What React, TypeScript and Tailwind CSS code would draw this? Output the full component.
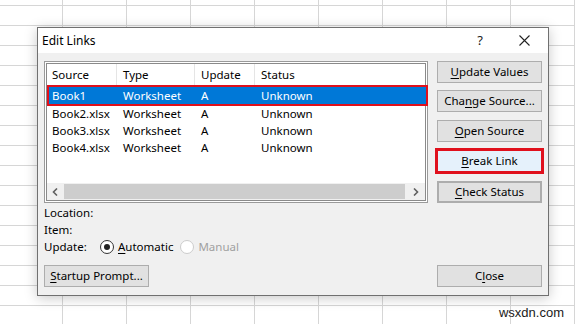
import React from "react";

const F = "font-['Noto_Sans',sans-serif]";

function Btn({ children, className = "" }: { children: React.ReactNode; className?: string }) {
  return (
    <div className={`h-[22px] w-[105px] flex items-center justify-center text-[11.5px] text-black bg-[#e1e1e1] border border-[#adadad] ${className}`}>
      {children}
    </div>
  );
}

function Radio({ checked, disabled }: { checked?: boolean; disabled?: boolean }) {
  return (
    <div className={`w-[14px] h-[14px] rounded-full border flex items-center justify-center bg-white ${disabled ? "border-[#cccccc] bg-[#f0f0f0]" : "border-[#333333]"}`}>
      {checked && <div className="w-[6px] h-[6px] rounded-full bg-[#222222]" />}
    </div>
  );
}

const rows = [
  ["Book1", "Worksheet", "A", "Unknown"],
  ["Book2.xlsx", "Worksheet", "A", "Unknown"],
  ["Book3.xlsx", "Worksheet", "A", "Unknown"],
  ["Book4.xlsx", "Worksheet", "A", "Unknown"],
];

export default function App() {
  return (
    <div className={`w-[575px] h-[324px] overflow-hidden bg-white bg-[linear-gradient(to_right,#d6d6d6_1px,transparent_1px),linear-gradient(to_bottom,#d6d6d6_1px,transparent_1px)] bg-[size:64px_20px] bg-[position:62px_5px] ${F}`}>
      <div className="pt-[27px] pl-[37px]">
        <div className="w-[512px] h-[269px] border border-[#707070] bg-[#f0f0f0] shadow-[0_2px_12px_rgba(0,0,0,0.22)] flex flex-col">
          {/* title bar */}
          <div className="h-[25px] bg-white flex items-center shrink-0">
            <div className="pl-[4px] text-[12px] text-black leading-none flex-1">Edit Links</div>
            <div className="w-[20px] text-[13px] text-[#222] leading-none text-center mr-[29px]">?</div>
            <svg width="11" height="11" viewBox="0 0 11 11" className="mr-[18px]">
              <path d="M0.5 0.5 L10.5 10.5 M10.5 0.5 L0.5 10.5" stroke="#222" strokeWidth="1.1" />
            </svg>
          </div>
          {/* body */}
          <div className="flex flex-1 pl-[6px] pr-[6px] pt-[8px] pb-[8px]">
            <div className="flex flex-col w-[384px]">
              {/* list */}
              <div className="h-[142px] border border-[#9a9a9a] p-[1px] bg-white">
                <div className="h-full border border-[#8a8a8a] bg-white flex flex-col">
                  <div className="h-[22px] flex items-center text-[11.5px] text-black shrink-0">
                    <div className="w-[70px] pl-[5px] border-r border-[#e5e5e5] h-full flex items-center">Source</div>
                    <div className="w-[78px] pl-[6px] border-r border-[#e5e5e5] h-full flex items-center">Type</div>
                    <div className="w-[60px] pl-[6px] border-r border-[#e5e5e5] h-full flex items-center">Update</div>
                    <div className="pl-[6px] h-full flex items-center">Status</div>
                  </div>
                  <div className="flex-1 flex flex-col">
                    {rows.map((r, i) => (
                      <div
                        key={i}
                        className={`h-[17px] flex items-center text-[11.5px] ${i === 0 ? "bg-[#0078d7] text-white outline-[2px] outline-solid outline-[#e0101c] ml-[2px] mr-[-1px] h-[16px] mt-[1px] mb-[1px]" : "text-black"}`}
                      >
                        <div className={`${i === 0 ? "w-[68px] pl-[3px]" : "w-[70px] pl-[5px]"}`}>{r[0]}</div>
                        <div className="w-[78px] pl-[6px]">{r[1]}</div>
                        <div className="w-[60px] pl-[6px]">{r[2]}</div>
                        <div className="pl-[6px]">{r[3]}</div>
                      </div>
                    ))}
                  </div>
                  {/* scrollbar */}
                  <div className="h-[17px] flex items-stretch shrink-0 bg-[#f0f0f0]">
                    <div className="w-[17px] flex items-center justify-center">
                      <svg width="7" height="8" viewBox="0 0 7 8"><path d="M5 0.5 L1.5 4 L5 7.5" stroke="#606060" strokeWidth="1.6" fill="none" /></svg>
                    </div>
                    <div className="flex-1 bg-[#cdcdcd] my-[1px]" />
                    <div className="w-[20px] flex items-center justify-center">
                      <svg width="7" height="8" viewBox="0 0 7 8"><path d="M2 0.5 L5.5 4 L2 7.5" stroke="#606060" strokeWidth="1.6" fill="none" /></svg>
                    </div>
                  </div>
                </div>
              </div>
              {/* info */}
              <div className="mt-[1px] text-[11.5px] text-black flex flex-col">
                <div className="h-[17px] flex items-center">Location:</div>
                <div className="h-[17px] flex items-center">Item:</div>
                <div className="h-[17px] flex items-center">
                  <span className="w-[56px]">Update:</span>
                  <Radio checked />
                  <span className="ml-[4px]"><span className="underline underline-offset-2">A</span>utomatic</span>
                  <span className="ml-[7px]"><Radio disabled /></span>
                  <span className="ml-[4px] text-[#a0a0a0]">Manual</span>
                </div>
              </div>
              <div className="flex-1" />
              <Btn className="w-[104px]">
                <span><span className="underline underline-offset-2">S</span>tartup Prompt...</span>
              </Btn>
            </div>
            <div className="flex-1" />
            <div className="flex flex-col w-[105px]">
              <Btn><span><span className="underline underline-offset-2">U</span>pdate Values</span></Btn>
              <Btn className="mt-[7px]"><span>Cha<span className="underline underline-offset-2">n</span>ge Source...</span></Btn>
              <Btn className="mt-[8px]"><span><span className="underline underline-offset-2">O</span>pen Source</span></Btn>
              <Btn className="mt-[8px] bg-[#e5f1fb] border-[#0078d7] outline-[3px] outline-solid outline-[#e0101c] outline-offset-[-1px]"><span><span className="underline underline-offset-2">B</span>reak Link</span></Btn>
              <Btn className="mt-[9px] border-[2px] border-[#0078d7]"><span><span className="underline underline-offset-2">C</span>heck Status</span></Btn>
              <div className="flex-1" />
              <Btn><span>C<span className="underline underline-offset-2">l</span>ose</span></Btn>
            </div>
          </div>
        </div>
      </div>
      <div className="flex justify-end pr-[11px] mt-[10px]">
        <span className="font-['Liberation_Sans',sans-serif] text-[13px] text-[#1a1a1a] leading-none">wsxdn.com</span>
      </div>
    </div>
  );
}
